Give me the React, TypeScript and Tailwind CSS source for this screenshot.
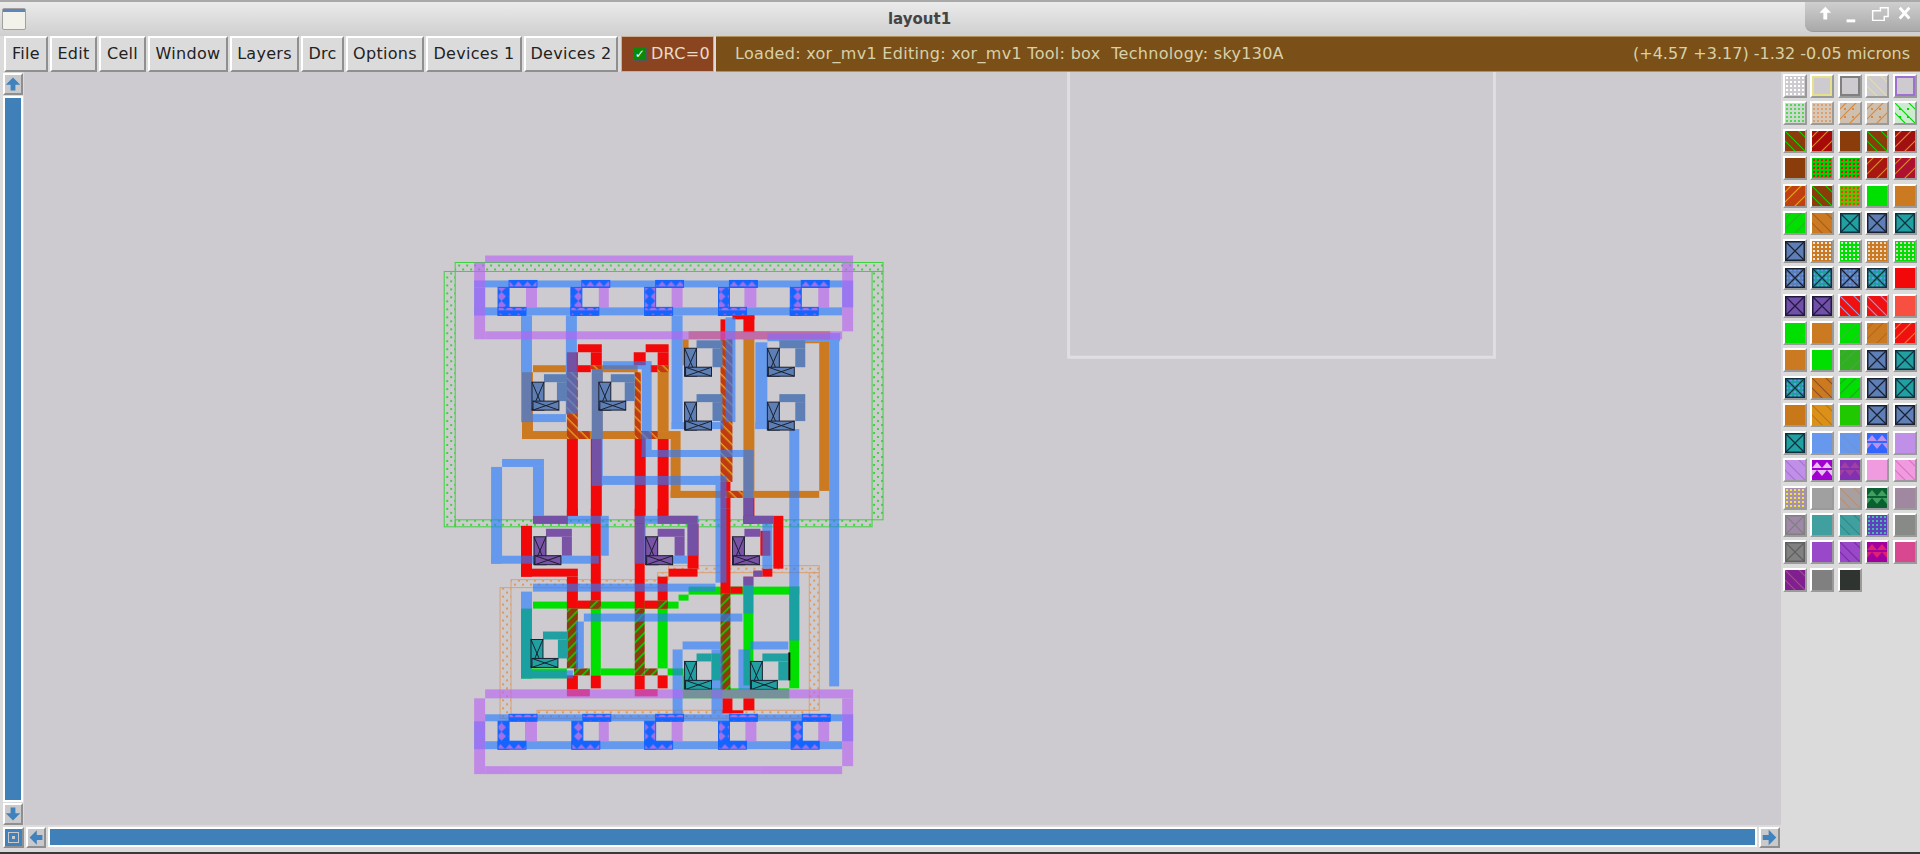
import React from 'react'

type R = [number, number, number, number]

const FONT = "font-['DejaVu_Sans',sans-serif]"

const menus: [string, string][] = [
  ['File', 'w-[44px]'],
  ['Edit', 'w-[47px]'],
  ['Cell', 'w-[47px]'],
  ['Window', 'w-[80px]'],
  ['Layers', 'w-[69px]'],
  ['Drc', 'w-[43px]'],
  ['Options', 'w-[78px]'],
  ['Devices 1', 'w-[96px]'],
  ['Devices 2', 'w-[94px]'],
]

// rects below are x1 y1 x2 y2 in page pixels
const nwell: R[] = [[454, 263, 883, 272], [872, 272, 883, 521], [443, 272, 454, 528], [454, 521, 872, 528]]
const pwell: R[] = [[668, 567, 819, 574], [510, 581, 657, 589], [657, 574, 668, 581], [499, 589, 510, 720], [809, 574, 819, 712], [536, 712, 809, 720]]

const orange: R[] = [
  [532, 366, 565, 373], [521, 373, 532, 440], [521, 432, 680, 440], [670, 440, 680, 499], [670, 492, 819, 499],
  [819, 342, 829, 492], [743, 333, 754, 492], [657, 366, 668, 432], [591, 366, 637, 373], [591, 373, 602, 432], [682, 340, 688, 366],
  [780, 342, 819, 344], [565, 373, 570, 415], [634, 373, 640, 440], [688, 332, 830, 340],
]

const green: R[] = [
  [532, 603, 678, 610], [678, 596, 688, 602], [688, 588, 799, 596], [590, 610, 600, 677], [657, 610, 667, 670],
  [600, 670, 634, 677], [667, 670, 683, 677], [743, 587, 753, 687], [789, 588, 799, 690], [711, 655, 720, 682],
  [520, 610, 531, 680], [520, 670, 566, 680], [682, 677, 688, 692], [682, 690, 789, 700],
]

const red: R[] = [
  [566, 440, 577, 517], [590, 440, 601, 517], [634, 440, 645, 517], [657, 440, 668, 517],
  [577, 345, 601, 353], [590, 353, 601, 366], [566, 353, 577, 373], [577, 366, 590, 373],
  [645, 345, 668, 353], [657, 353, 668, 366], [633, 353, 645, 366], [650, 366, 657, 373],
  [720, 320, 725, 340], [743, 316, 754, 333], [732, 316, 754, 320], [720, 483, 730, 510],
  [743, 499, 754, 525], [743, 517, 773, 525], [532, 517, 567, 525], [657, 517, 697, 525], [687, 525, 698, 570],
  [520, 527, 531, 578], [520, 570, 577, 578], [566, 578, 577, 610], [577, 602, 600, 610], [590, 510, 600, 602],
  [566, 510, 577, 517], [634, 510, 644, 610], [644, 602, 667, 610], [657, 578, 667, 602], [657, 510, 667, 517],
  [668, 570, 697, 578], [720, 510, 730, 595], [730, 588, 742, 595], [760, 532, 770, 557], [773, 517, 783, 570],
  [762, 570, 772, 578], [566, 677, 577, 691], [590, 677, 600, 690], [566, 691, 589, 698], [634, 677, 644, 691],
  [657, 677, 667, 690], [634, 691, 657, 698], [722, 700, 732, 715], [743, 700, 754, 712], [722, 712, 743, 715],
  [753, 572, 762, 578], [743, 578, 753, 587],
]

const polyOnP: R[] = [
  [566, 373, 577, 440], [577, 432, 589, 440], [634, 373, 640, 440], [640, 432, 657, 440], [657, 366, 668, 373],
  [590, 366, 601, 370], [720, 340, 732, 483], [725, 492, 742, 499],
]
const polyOnN: R[] = [
  [566, 610, 577, 670], [573, 670, 589, 677], [589, 602, 600, 610], [634, 610, 644, 677], [644, 670, 657, 677],
  [657, 602, 667, 610], [720, 595, 730, 692],
]

const blue: R[] = [
  [473, 288, 484, 316], [842, 281, 853, 308], [473, 281, 842, 288], [473, 308, 842, 316],
  [473, 723, 484, 751], [842, 716, 853, 743], [484, 716, 842, 723], [484, 743, 842, 751],
  [520, 316, 531, 423], [520, 415, 565, 423], [565, 316, 576, 415], [591, 370, 602, 487], [602, 362, 650, 370],
  [641, 362, 651, 458], [641, 451, 753, 458], [743, 451, 753, 517], [591, 477, 723, 486], [715, 477, 726, 584],
  [671, 316, 682, 430], [671, 423, 723, 430], [725, 318, 735, 423], [755, 343, 767, 430], [767, 334, 840, 342],
  [829, 334, 839, 688], [789, 430, 799, 642], [755, 423, 790, 430], [490, 468, 501, 565], [501, 460, 543, 468],
  [532, 468, 543, 517], [490, 557, 598, 565], [532, 517, 608, 525], [600, 525, 608, 557], [634, 517, 698, 525],
  [687, 525, 698, 557], [634, 525, 645, 565], [645, 557, 687, 565], [743, 517, 773, 525], [762, 525, 772, 570],
  [753, 572, 762, 578], [743, 578, 753, 615], [532, 585, 715, 593], [583, 615, 742, 623], [575, 623, 583, 670],
  [520, 593, 531, 680], [520, 672, 572, 680], [682, 643, 720, 651], [672, 651, 682, 723], [711, 651, 722, 723],
  [750, 643, 788, 651], [738, 651, 750, 692],
]

const purple: R[] = [
  [484, 256, 853, 263], [473, 263, 484, 340], [484, 332, 842, 340], [842, 263, 853, 332],
  [484, 691, 853, 700], [473, 700, 484, 776], [484, 768, 842, 776], [842, 700, 853, 768],
  [525, 288, 536, 308], [598, 288, 608, 308], [671, 288, 682, 308], [744, 288, 756, 308], [818, 288, 829, 308],
  [524, 723, 536, 743], [598, 723, 608, 743], [671, 723, 682, 743], [745, 723, 756, 743], [818, 723, 829, 743],
]

const tapTop = [497, 570, 644, 718, 790]
const tapBottom = [497, 571, 644, 718, 791]

// x, y, colour, cap width, height of the column under the cap
const contacts: [number, number, string, number, number][] = [
  [684, 349, '#5d7fb5', 26, 19], [684, 403, '#5d7fb5', 26, 19], [767, 349, '#5d7fb5', 26, 19], [767, 403, '#5d7fb5', 26, 19],
  [531, 383, '#5d7fb5', 23, 19], [598, 383, '#5d7fb5', 24, 19],
  [533, 538, '#7a52a6', 26, 19], [645, 538, '#7a52a6', 27, 19], [732, 538, '#7a52a6', 16, 0],
  [530, 641, '#20a0a0', 25, 19], [684, 663, '#20a0a0', 15, 0], [750, 663, '#20a0a0', 26, 19],
]

function Rects({ list, fill }: { list: R[]; fill?: string }) {
  return (
    <>
      {list.map(([a, b, c, d], i) => (
        <rect key={i} x={a} y={b} width={c - a} height={d - b} fill={fill} />
      ))}
    </>
  )
}

function Contact({ x, y, color, cap, col }: { x: number; y: number; color: string; cap: number; col: number }) {
  const line = '#1a2030'
  return (
    <g>
      <rect x={x + 12} y={y - 8} width={cap} height={8} fill={color} />
      {col > 0 && <rect x={x + 12 + cap - 10} y={y} width={10} height={col} fill={color} />}
      <rect x={x} y={y} width={12} height={28} fill={color} stroke={line} />
      <path d={`M${x} ${y}l12 28M${x + 12} ${y}l-12 28`} stroke={line} fill="none" />
      <rect x={x + 1} y={y + 19} width={26} height={9} fill={color} stroke={line} />
      <path d={`M${x + 1} ${y + 19}l26 9M${x + 27} ${y + 19}l-26 9`} stroke={line} fill="none" />
    </g>
  )
}

function Tap({ x, top, mid, bottom }: { x: number; top: number; mid: number; bottom: number }) {
  return (
    <g stroke="#1464ff">
      <rect x={x} y={mid} width={11} height={bottom - mid} fill="url(#tapV)" />
      <rect x={x} y={bottom - 8} width={28} height={8} fill="url(#tap)" />
      <rect x={x + 11} y={top} width={28} height={mid - top} fill="url(#tap)" />
    </g>
  )
}

function Layout() {
  return (
    <svg className="block h-full w-full" viewBox="24 72 1757 755">
      <defs>
        <pattern id="gdots" width="8" height="8" patternUnits="userSpaceOnUse">
          <rect x="1" y="1" width="2" height="2" fill="#40d040" />
          <rect x="5" y="5" width="2" height="2" fill="#40d040" />
        </pattern>
        <pattern id="odots" width="8" height="8" patternUnits="userSpaceOnUse">
          <rect x="1" y="1" width="2" height="2" fill="#d89a60" />
          <rect x="5" y="5" width="2" height="2" fill="#d89a60" />
        </pattern>
        <pattern id="hatchP" width="7" height="7" patternUnits="userSpaceOnUse" patternTransform="rotate(45)">
          <rect width="7" height="7" fill="#c03c10" />
          <rect width="7" height="1.4" fill="#e8a020" />
        </pattern>
        <pattern id="hatchN" width="7" height="7" patternUnits="userSpaceOnUse" patternTransform="rotate(-45)">
          <rect width="7" height="7" fill="#8a3c0a" />
          <rect width="7" height="1.6" fill="#00d800" />
        </pattern>
        <pattern id="tap" width="9" height="8" patternUnits="userSpaceOnUse">
          <rect width="9" height="8" fill="#1464ff" />
          <path d="M0 7L4.5 2L9 7z" fill="#a070e8" />
        </pattern>
        <pattern id="tapV" width="11" height="9" patternUnits="userSpaceOnUse">
          <rect width="11" height="9" fill="#1464ff" />
          <path d="M1 0H10L5.5 4.5zM1 9H10L5.5 4.5z" fill="#a070e8" />
        </pattern>
      </defs>

      <path d="M1069 72V358H1496V72" fill="none" stroke="#dfdee0" strokeWidth="3" />

      <g fill="url(#gdots)" stroke="#40d040">
        <Rects list={nwell} />
      </g>
      <g fill="url(#odots)" stroke="#dca070">
        <Rects list={pwell} />
      </g>

      <Rects list={orange} fill="#cc7a22" />
      <Rects list={green} fill="#00e000" />
      <Rects list={red} fill="#f20808" />
      <Rects list={polyOnP} fill="url(#hatchP)" />
      <Rects list={polyOnN} fill="url(#hatchN)" />

      <g opacity={0.63} fill="#2a7cff">
        <Rects list={blue} />
      </g>

      {contacts.map(([x, y, c, cap, col]) => (
        <Contact key={`${x}-${y}`} x={x} y={y} color={c} cap={cap} col={col} />
      ))}
      <rect x="788" y="654" width="2" height="28" fill="#000" />

      <g opacity={0.64} fill="#b965f3">
        <Rects list={purple} />
      </g>

      {tapTop.map((x) => (
        <Tap key={x} x={x} top={281} mid={288} bottom={316} />
      ))}
      {tapBottom.map((x) => (
        <Tap key={x} x={x} top={716} mid={723} bottom={751} />
      ))}
    </svg>
  )
}

// palette icon: [background, kind, foreground]
// kinds: s solid, o outline, f forward hatch, b back hatch, d dots, F/B hatch with dots, x crossed box, y crossed box with dots, t triangles
type Swatch = [string, string, string?]

const swatches: Swatch[] = [
  ['#cdcbcf', 'w', '#ffffff'], ['#cdcbcf', 'o', '#e6e08c'], ['#cdcbcf', 'o', '#808080'], ['#cdcbcf', 'b', '#e6e08c'], ['#cdcbcf', 'o', '#a070d0'],
  ['#cdd8cf', 'd', '#50d850'], ['#d8c8b8', 'd', '#dca070'], ['#cdc0b0', 'F', '#d88a40'], ['#cdc0b0', 'F', '#d88a40'], ['#cdebcf', 'B', '#00d800'],
  ['#8a3c0a', 'b', '#00d800'], ['#a80a0a', 'f', '#d88a30'], ['#8a3c0a', 's'], ['#8a3c0a', 'b', '#00d800'], ['#a01010', 'f', '#d88a30'],
  ['#8a3c0a', 's'], ['#00d000', 'd', '#f01010'], ['#00d000', 'd', '#f01010'], ['#a81810', 'f', '#d88a30'], ['#b01030', 'f', '#d88a30'],
  ['#c04010', 'f', '#e8a020'], ['#8a3c0a', 'b', '#00d800'], ['#60c000', 'd', '#f04010'], ['#00e000', 's'], ['#cc7a22', 's'],
  ['#00e000', 'f', '#40a040'], ['#cc7a22', 'b', '#a06020'], ['#20a0a0', 'x', '#103040'], ['#5d7fb5', 'x', '#1a2030'], ['#20a0a0', 'x', '#103040'],
  ['#5d7fb5', 'x', '#1a2030'], ['#cc7a22', 'd', '#e8e8e8'], ['#00e000', 'd', '#e8e8e8'], ['#cc7a22', 'd', '#e8d8c8'], ['#00e000', 'd', '#e8c8c8'],
  ['#5d7fb5', 'y', '#1a2030'], ['#20a0a0', 'y', '#103040'], ['#5d7fb5', 'y', '#1a2030'], ['#20a0a0', 'y', '#103040'], ['#f20808', 's'],
  ['#7050a8', 'x', '#201840'], ['#7050a8', 'x', '#201840'], ['#f01010', 'b', '#90a0e0'], ['#f01010', 'b', '#90a0e0'], ['#f85040', 's'],
  ['#00e000', 's'], ['#cc7a22', 's'], ['#00e000', 'f', '#30c030'], ['#cc7a22', 'f', '#b06a20'], ['#f01010', 'f', '#d88a30'],
  ['#cc7a22', 's'], ['#00e000', 's'], ['#30b020', 'f', '#50a050'], ['#5d7fb5', 'x', '#1a2030'], ['#20a0a0', 'x', '#103040'],
  ['#20a0a0', 'y', '#103040'], ['#cc7a22', 'b', '#905020'], ['#00e000', 'f', '#409040'], ['#5d7fb5', 'x', '#1a2030'], ['#20a0a0', 'x', '#103040'],
  ['#c87818', 's'], ['#dc9018', 'b', '#b07820'], ['#20c800', 's'], ['#5d7fb5', 'x', '#1a2030'], ['#6080b8', 'x', '#1a2030'],
  ['#20a0a0', 'x', '#103040'], ['#6699ee', 's'], ['#6699ee', 'b', '#8090c0'], ['#3366ff', 't', '#c090e8'], ['#c090e8', 's'],
  ['#c090e8', 'b', '#a870d0'], ['#a000d0', 't', '#e8c0f0'], ['#8030b0', 't', '#a040a0'], ['#f09ae0', 's'], ['#f09ae0', 'b', '#e070c0'],
  ['#a890b0', 'd', '#f0e040'], ['#a0a0a0', 's'], ['#a8a0a0', 'b', '#b89070'], ['#0a6030', 't', '#40a060'], ['#a088a0', 's'],
  ['#a088a8', 'x', '#808080'], ['#40a0a0', 's'], ['#40a0a0', 'b', '#308888'], ['#6040c0', 'd', '#40c0a0'], ['#888a88', 's'],
  ['#808280', 'x', '#606060'], ['#9848c8', 's'], ['#9848c8', 'b', '#7830a0'], ['#a000a0', 't', '#e02070'], ['#d84890', 's'],
  ['#802090', 'b', '#a05080'], ['#808080', 's'], ['#303430', 's'],
]

function SwatchArt({ bg, kind, fg }: { bg: string; kind: string; fg?: string }) {
  const grid = [2, 6, 10, 14, 18]
  return (
    <svg viewBox="0 0 20 20" className="block h-full w-full">
      <rect width="20" height="20" fill={bg} />
      {kind === 'o' && <rect x="1" y="1" width="18" height="18" fill="none" stroke={fg} strokeWidth="2" />}
      {(kind === 'f' || kind === 'F') && <path d="M-2 8L8 -2M-2 18L18 -2M8 22L22 8" stroke={fg} strokeWidth="1.2" />}
      {(kind === 'b' || kind === 'B') && <path d="M12 -2L22 8M-2 -2L22 22M-2 8L12 22" stroke={fg} strokeWidth="1.2" />}
      {(kind === 'F' || kind === 'B') &&
        [4, 12].flatMap((x) => [5, 13].map((y) => <rect key={`${x}${y}`} x={x} y={y} width="2" height="2" fill={fg} />))}
      {(kind === 'd' || kind === 'w') &&
        grid.flatMap((x) => grid.map((y) => <rect key={`${x}${y}`} x={x - 1} y={y - 1} width="2" height="2" fill={fg} />))}
      {kind === 'y' && grid.flatMap((x) => grid.map((y) => <rect key={`${x}${y}`} x={x - 1} y={y - 1} width="2" height="2" fill="#6699ee" />))}
      {(kind === 'x' || kind === 'y') && (
        <>
          <rect x="0.75" y="0.75" width="18.5" height="18.5" fill="none" stroke={fg} strokeWidth="1.5" />
          <path d="M1 1L19 19M19 1L1 19" stroke={fg} strokeWidth="1.2" />
        </>
      )}
      {kind === 't' && <path d="M0 8L5 2L10 8zM10 8L15 2L20 8zM5 10L10 16L15 10zM-5 10L0 16L5 10zM15 10L20 16L25 10z" fill={fg} />}
    </svg>
  )
}

function ArrowButton({ d, className }: { d: string; className: string }) {
  return (
    <div className={`${className} border-2 border-t-white border-l-white border-r-[#8f8f8f] border-b-[#8f8f8f] bg-[#c9c8ca]`}>
      <svg viewBox="0 0 20 20" className="block h-full w-full">
        <path d={d} fill="#3f82bd" />
      </svg>
    </div>
  )
}

export default function App() {
  return (
    <div className={`flex h-[854px] w-[1920px] flex-col overflow-hidden bg-[#dcdbdc] ${FONT}`}>
      <div className="flex h-[36px] items-start border-t-2 border-[#a9a9a9] bg-gradient-to-b from-[#ebebeb] to-[#cfcfcf]">
        <div className="ml-[2px] mt-[6px] h-[22px] w-[24px] rounded-[2px] border border-[#a0a0a0] bg-[#f2f2ea]">
          <div className="h-[3px] bg-[#5c86b8]" />
        </div>
        <div className="flex-1 pl-[8px] pt-[8px] text-center text-[15px] font-bold leading-[18px] text-[#444]">layout1</div>
        <div className="h-[30px] w-[115px] rounded-bl-[8px] border-b border-[#999] bg-gradient-to-b from-[#cfcfcf] to-[#a9a9a9]">
          <svg viewBox="0 0 115 30" className="block h-full w-full">
            <path d="M13 11l6-6 6 6h-4v7h-4v-7z" fill="#fff" />
            <rect x="41" y="18" width="9" height="3" fill="#fff" />
            <path d="M68 9h8v-3h8v9h-4v4h-12z" fill="none" stroke="#fff" strokeWidth="1.5" />
            <path d="M96 6l10 11M106 6l-10 11" stroke="#fff" strokeWidth="3" />
          </svg>
        </div>
      </div>

      <div className="flex h-[36px] items-stretch gap-[2px] pl-[4px] text-[16px] tracking-[0.3px] text-[#222]">
        {menus.map(([label, w]) => (
          <button
            key={label}
            className={`${w} flex items-center justify-center border-2 border-t-white border-l-white border-r-[#8f8f8f] border-b-[#8f8f8f] bg-[#dcdbdc] whitespace-nowrap`}
          >
            {label}
          </button>
        ))}
        <div className="ml-[1px] flex w-[93px] items-center gap-[4px] border border-[#c8b090] bg-[#8a4520] pl-[11px] text-[#e8dcc8]">
          <span className="flex h-[14px] w-[14px] items-center justify-center border border-[#555] bg-[#0a8a0a] text-[12px] font-bold leading-none text-white">✓</span>
          DRC=0
        </div>
        <div className="flex flex-1 items-center justify-between border-y border-[#b09060] bg-[#7a5018] pl-[19px] pr-[10px] text-[#d8d0a8]">
          <span className="whitespace-pre">Loaded: xor_mv1 Editing: xor_mv1 Tool: box  Technology: sky130A</span>
          <span className="tracking-normal">(+4.57 +3.17) -1.32 -0.05 microns</span>
        </div>
      </div>

      <div className="flex min-h-0 flex-1">
        <div className="flex w-[1781px] flex-col">
          <div className="flex min-h-0 flex-1">
            <div className="flex w-[24px] flex-col items-center pl-[2px] pt-[1px]">
              <ArrowButton className="h-[22px] w-[20px]" d="M10 2L19 11H13V18H7V11H1z" />
              <div className="my-[1px] w-[20px] flex-1 border-2 border-white bg-[#4080b8]" />
              <ArrowButton className="h-[22px] w-[20px]" d="M10 18L19 9H13V2H7V9H1z" />
            </div>
            <div className="min-w-0 flex-1 bg-[#cdcbcf]">
              <Layout />
            </div>
          </div>
          <div className="flex h-[27px] items-start gap-[2px] pl-[3px] pt-[2px]">
            <div className="flex h-[21px] w-[21px] items-center justify-center border-2 border-t-white border-l-white border-r-[#8f8f8f] border-b-[#8f8f8f] bg-[#3f82bd]">
              <div className="flex h-[11px] w-[11px] items-center justify-center border border-[#c9c8ca]">
                <div className="h-[3px] w-[3px] bg-[#c9c8ca]" />
              </div>
            </div>
            <ArrowButton className="h-[21px] w-[20px]" d="M2 10L11 1V7H18V13H11V19z" />
            <div className="h-[20px] flex-1 border-2 border-white bg-[#4080b8]" />
            <ArrowButton className="mr-[1px] h-[21px] w-[21px]" d="M18 10L9 1V7H2V13H9V19z" />
          </div>
        </div>
        <div className="flex-1 pl-[2px] pt-[2px]">
          <div className="grid grid-cols-[repeat(5,24px)] auto-rows-[24px] gap-x-[3.4px] gap-y-[3.45px]">
            {swatches.map(([bg, kind, fg], i) => (
              <div key={i} className="border-2 border-t-white border-l-white border-r-[#9a9a9a] border-b-[#9a9a9a]">
                <SwatchArt bg={bg} kind={kind} fg={fg} />
              </div>
            ))}
          </div>
        </div>
      </div>
      <div className="h-[2px] bg-[#3a3a3a]" />
    </div>
  )
}
